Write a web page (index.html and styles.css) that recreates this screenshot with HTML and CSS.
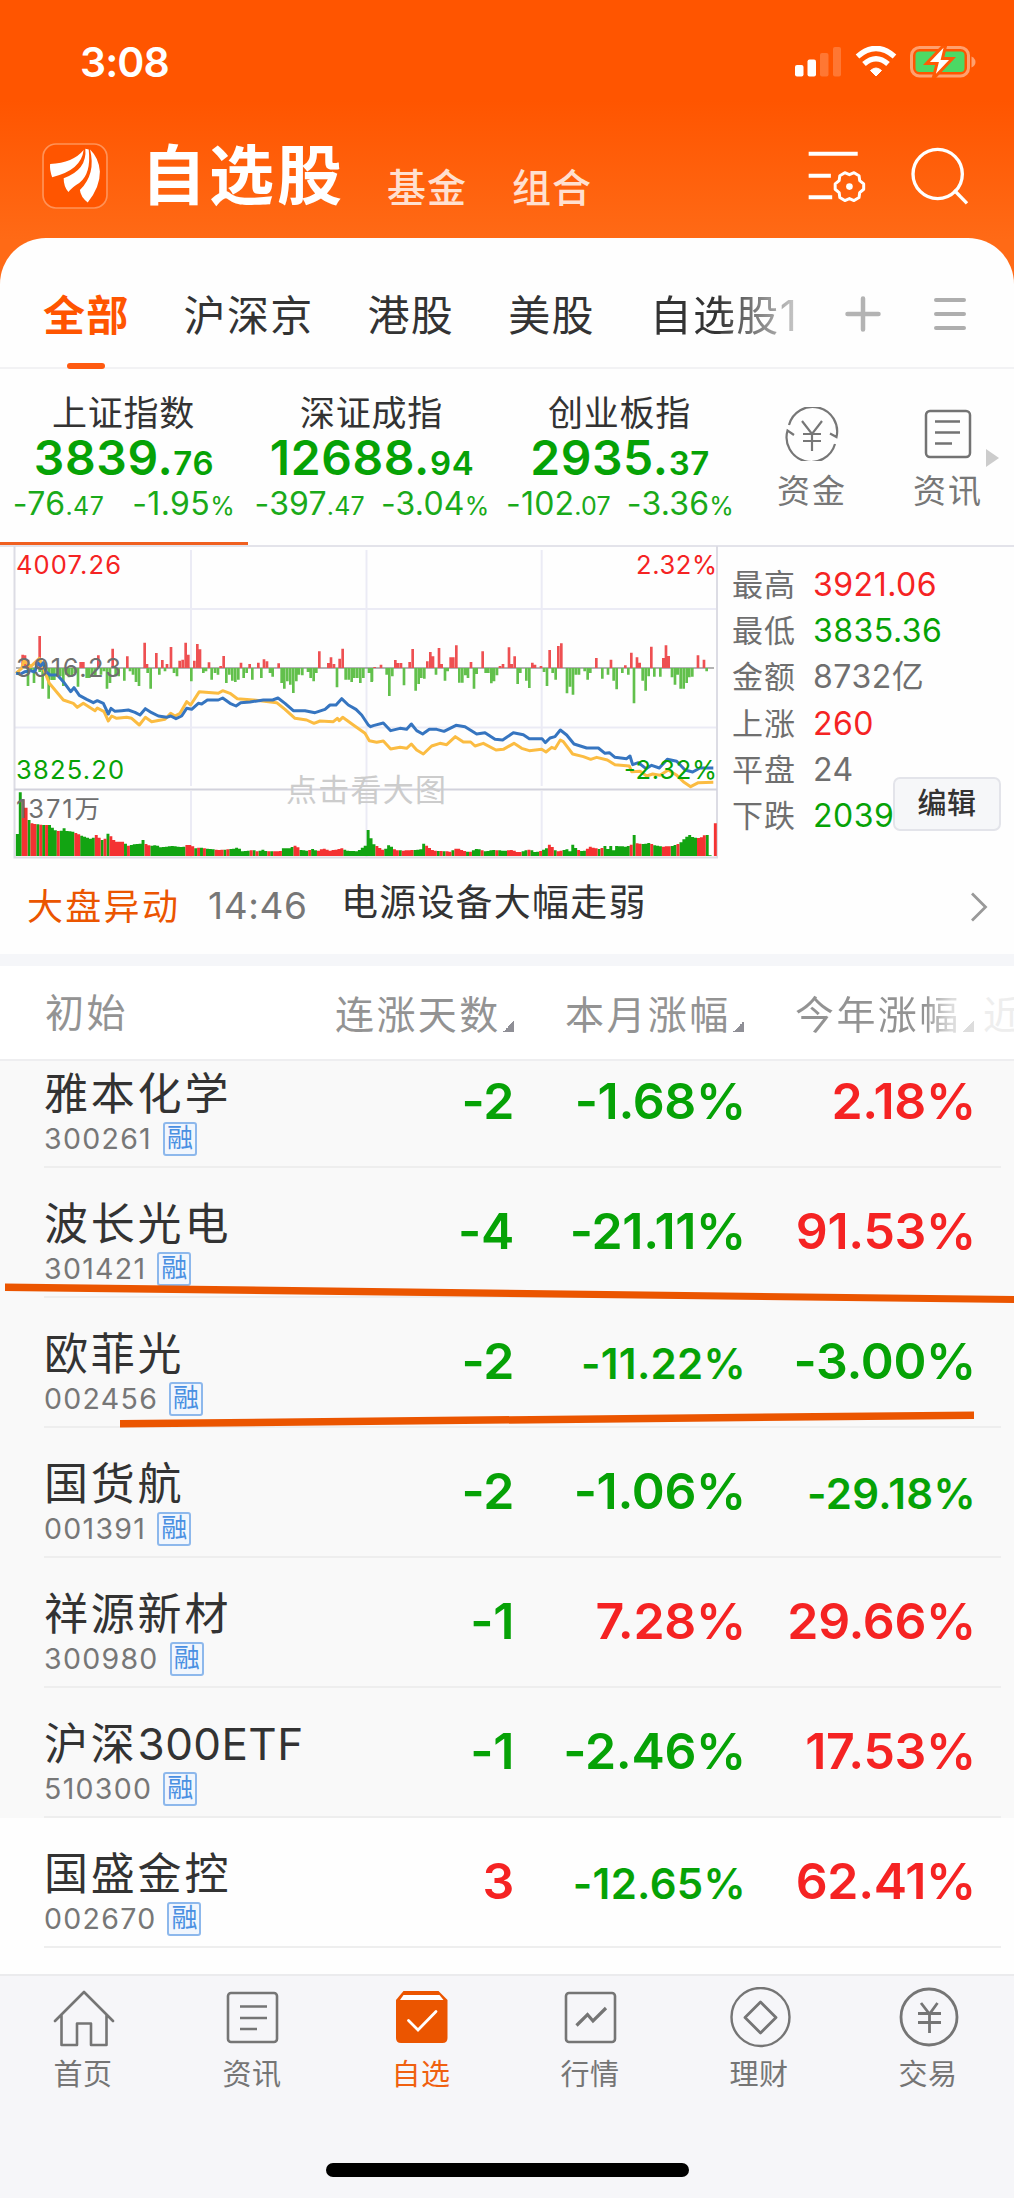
FILE: index.html
```html
<!DOCTYPE html>
<html lang="zh-CN">
<head>
<meta charset="utf-8">
<title>自选股</title>
<link rel="stylesheet" href="styles.css">
</head>
<body>
<div class="app">
  <div class="status">
    <span class="clock">3:08</span>
    <svg class="status-icons" viewBox="0 0 183 32" width="183" height="32">
      <g fill="#fff">
        <rect x="0" y="19" width="8.500" height="11.500" rx="2"/>
        <rect x="12.500" y="13.500" width="8.500" height="17" rx="2"/>
        <rect x="25" y="7" width="8.500" height="23.500" rx="2" opacity=".2"/>
        <rect x="38" y="1" width="8" height="29.500" rx="2" opacity=".2"/>
        <path d="M81 30 L75.500 24.500 Q81 19.500 86.500 24.500Z" stroke="#fff" stroke-linejoin="round"/>
      </g>
      <g fill="none" stroke="#fff" stroke-width="5.500">
        <path d="M62.500 10.500 Q81 -5.500 99.500 10.500"/>
        <path d="M69 18 Q81 7.500 93 18"/>
      </g>
      <rect x="116.500" y="1.500" width="57" height="28.500" rx="8" fill="none" stroke="#ffa06e" stroke-width="3"/>
      <rect x="120.500" y="5.500" width="49" height="20.500" rx="4" fill="#4cd964"/>
      <path d="M176.500 10.500 q4 2 4 5.500 t-4 5.500Z" fill="#ffa06e"/>
      <path d="M150 -2 L131.500 17.500 H142 L138 33 L157.500 12.500 H147.500 L151 -2Z" fill="#fff" stroke="#ff5a05" stroke-width="3"/>
    </svg>
  </div>
  <header class="header">
    <svg class="logo" viewBox="128 431 195 195" width="66" height="66">
      <rect x="131" y="434" width="189" height="189" rx="38" fill="#ff5500" stroke="#ff9257" stroke-width="5"/>
      <g fill="#fff">
        <path d="M152 493 Q220 490 251 452 Q244 512 158 532 Q150 510 152 493Z"/>
        <path d="M256 448 Q262 510 192 535 Q192 560 206 576 Q216 562 238 549 Q274 522 266 450Z"/>
        <path d="M270 450 Q288 522 240 570 Q242 590 263 607 Q300 560 299 515 Q296 475 270 450Z"/>
      </g>
    </svg>
    <h1 class="title">自选股</h1>
    <span class="sub sub-fund">基金</span>
    <span class="sub sub-group">组合</span>
    <svg class="filter" viewBox="903 450 175 156" width="58" height="52" fill="none" stroke="#fff" stroke-width="12">
      <path d="M905 461H1053M905 527H972M905 592H976"/>
      <path stroke-width="9" stroke-linejoin="round" d="M1071 552V568L1059 578L1057 593L1042 602L1028 596L1014 602L999 593L997 578L985 568V552L997 542L999 527L1014 518L1028 524L1042 518L1057 527L1059 542Z"/>
      <circle cx="1028" cy="560" r="10" fill="#fff" stroke="none"/>
    </svg>
    <svg class="search" viewBox="1212 438 174 174" width="58" height="58" fill="none" stroke="#fff" stroke-width="10">
      <circle cx="1292" cy="519" r="74"/><path d="M1341 567L1380 607"/>
    </svg>
  </header>

  <main class="sheet">
    <nav class="tabs">
      <span class="tab tab-on">全部</span>
      <span class="tab t2">沪深京</span>
      <span class="tab t3">港股</span>
      <span class="tab t4">美股</span>
      <span class="tab t5">自选股1</span>
      <svg class="plus" width="36" height="36" viewBox="0 0 36 36" stroke="#b3b3b3" stroke-width="4.500" stroke-linecap="round"><path d="M18 2.500V33.500M2.500 18H33.500"/></svg>
      <svg class="menu" width="34" height="34" viewBox="0 0 34 34" stroke="#aeaeae" stroke-width="4" stroke-linecap="round"><path d="M3 3H31M3 17H31M3 31H31"/></svg>
    </nav>

    <section class="indices">
      <div class="index index-on">
        <div class="iname">上证指数</div>
        <div class="ival">3839.<small>76</small></div>
        <div class="ichg"><span>-76<small>.47</small></span><span>-1.95<small>%</small></span></div>
      </div>
      <div class="index">
        <div class="iname">深证成指</div>
        <div class="ival">12688.<small>94</small></div>
        <div class="ichg tight"><span>-397<small>.47</small></span><span>-3.04<small>%</small></span></div>
      </div>
      <div class="index">
        <div class="iname">创业板指</div>
        <div class="ival">2935.<small>37</small></div>
        <div class="ichg tight"><span>-102<small>.07</small></span><span>-3.36<small>%</small></span></div>
      </div>
      <div class="quick quick-money">
        <svg width="54" height="54" viewBox="0 0 54 54" fill="none" stroke="#777" stroke-width="2.200">
          <path d="M4 18A24.500 24.500 0 0 1 51.500 30L45 26.500"/>
          <path d="M50 37A24.500 24.500 0 0 1 2.500 23.500L9 28"/>
          <path d="M17 14L27 27L37 14M18 27H36M18 34H36M27 27V44"/>
        </svg>
        <span>资金</span>
      </div>
      <div class="quick quick-news">
        <svg width="48" height="54" viewBox="0 0 48 54" fill="none" stroke="#737373" stroke-width="2.500">
          <rect x="2" y="4" width="44" height="46" rx="4"/><path d="M11 14.500H36M11 25.500H36M11 36.500H28"/>
        </svg>
        <span>资讯</span>
      </div>
      <svg class="more" width="13" height="18" viewBox="0 0 13 18"><path d="M0 0L13 9L0 18Z" fill="#ccc"/></svg>
    </section>

    <section class="market">
      <svg class="chart" width="720" height="314" viewBox="0 545 720 314">
        <g fill="none" stroke="#ebebf5" stroke-width="2">
          <path d="M191 550V786M191 791V857M366.500 550V786M366.500 791V857M541.700 550V786M541.700 791V857M14 609H717M14 727.500H717"/>
          <path stroke="#dcdce4" d="M14.500 546V857.500H717V546"/>
          <path stroke="#d2d2dc" d="M14 789.500H717"/>
        </g>
        <path d="M16 668H714" stroke="#999" stroke-width="1.500"/>
        <text class="hint" x="286" y="801" textLength="160">点击看大图</text>
        <g id="plot" transform="translate(0 540) scale(.33333)"></g>
        <text class="axis red" x="16" y="573.500" textLength="105">4007.26</text>
        <text class="axis red" x="636" y="573.500" textLength="81">2.32%</text>
        <text class="axis gray" x="16" y="676.500" textLength="105">3916.23</text>
        <text class="axis green" x="16" y="779" textLength="108">3825.20</text>
        <text class="axis green" x="624" y="779" textLength="93">-2.32%</text>
        <text class="axis gray" x="16" y="818" textLength="84">1371万</text>
      </svg>
      <dl class="stats">
        <dt>最高</dt><dd class="red">3921.06</dd>
        <dt>最低</dt><dd class="green">3835.36</dd>
        <dt>金额</dt><dd>8732亿</dd>
        <dt>上涨</dt><dd class="red">260</dd>
        <dt>平盘</dt><dd>24</dd>
        <dt>下跌</dt><dd class="green">2039</dd>
      </dl>
      <button class="edit">编辑</button>
    </section>

    <section class="news">
      <span class="news-tag">大盘异动</span>
      <span class="news-time">14:46</span>
      <span class="news-title">电源设备大幅走弱</span>
      <svg class="chev" width="18" height="30" viewBox="0 0 18 30" fill="none" stroke="#999" stroke-width="2.800"><path d="M2 1.500L15.500 15L2 28.500"/></svg>
    </section>

    <section class="table">
      <div class="thead">
        <span class="h1c">初始</span>
        <span class="hc">连涨天数<i></i></span>
        <span class="hc">本月涨幅<i></i></span>
        <span class="hc">今年涨幅<i></i></span>
        <span class="hnext">近</span>
      </div>
      <div class="row row-first">
        <div class="stock"><b>雅本化学</b><p>300261<em>融</em></p></div>
        <span class="v green">-2</span><span class="v green">-1.68%</span><span class="v red">2.18%</span>
      </div>
      <div class="row">
        <div class="stock"><b>波长光电</b><p>301421<em>融</em></p></div>
        <span class="v green">-4</span><span class="v green">-21.11%</span><span class="v red">91.53%</span>
      </div>
      <div class="row">
        <div class="stock"><b>欧菲光</b><p>002456<em>融</em></p></div>
        <span class="v green">-2</span><span class="v green sm">-11.22%</span><span class="v green">-3.00%</span>
      </div>
      <div class="row">
        <div class="stock"><b>国货航</b><p>001391<em>融</em></p></div>
        <span class="v green">-2</span><span class="v green">-1.06%</span><span class="v green sm">-29.18%</span>
      </div>
      <div class="row">
        <div class="stock"><b>祥源新材</b><p>300980<em>融</em></p></div>
        <span class="v green">-1</span><span class="v red">7.28%</span><span class="v red">29.66%</span>
      </div>
      <div class="row">
        <div class="stock"><b>沪深<span class="latin">300ETF</span></b><p>510300<em>融</em></p></div>
        <span class="v green">-1</span><span class="v green">-2.46%</span><span class="v red">17.53%</span>
      </div>
      <div class="row row-last">
        <div class="stock"><b>国盛金控</b><p>002670<em>融</em></p></div>
        <span class="v red">3</span><span class="v green sm">-12.65%</span><span class="v red">62.41%</span>
      </div>
      <svg class="marks" width="1014" height="150" viewBox="0 1280 1014 150" fill="#eb5500">
        <path d="M5 1283.500L1014 1296V1303L5 1291Z"/>
        <path d="M120 1420L974 1411.500V1419L120 1427.500Z"/>
      </svg>
    </section>
  </main>

  <footer class="tabbar">
    <div class="items">
      <div class="item">
        <svg width="62" height="62" viewBox="0 0 62 62" fill="none" stroke="#757575" stroke-width="2.600" stroke-linejoin="round" stroke-linecap="round"><path d="M2 34L31 5L60 34M8.500 28V58H24V36.500H38V58H53.500V28"/></svg>
        <span>首页</span>
      </div>
      <div class="item">
        <svg width="62" height="62" viewBox="0 0 62 62" fill="none" stroke="#757575" stroke-width="2.600"><rect x="6" y="6" width="49" height="49" rx="3"/><path d="M18 19.500H45M18 31H45M18 42H35"/></svg>
        <span>资讯</span>
      </div>
      <div class="item on">
        <svg width="62" height="62" viewBox="0 0 62 62"><path d="M12.500 4H47.500L56.500 13V51Q56.500 56 51.500 56H10Q5 56 5 51V13Z" fill="#eb5500"/><path d="M12.500 8H48.500L52.500 13H9Z" fill="#fff"/><path d="M17.500 33.500L27 43L45 24.500" fill="none" stroke="#fff" stroke-width="2.800" stroke-linecap="round"/></svg>
        <span>自选</span>
      </div>
      <div class="item">
        <svg width="62" height="62" viewBox="0 0 62 62" fill="none" stroke="#757575" stroke-width="2.600"><rect x="6" y="6" width="49" height="49" rx="3"/><path d="M16.500 38.500L27.500 27.500L33 34L46 21" stroke-width="3.200"/></svg>
        <span>行情</span>
      </div>
      <div class="item">
        <svg width="62" height="62" viewBox="0 0 62 62" fill="none" stroke="#757575" stroke-width="2.400" stroke-linejoin="round"><circle cx="31.500" cy="30" r="29"/><path d="M31.500 15L47 30.500L31.500 46L16 30.500Z" stroke-width="2.800"/></svg>
        <span>理财</span>
      </div>
      <div class="item">
        <svg width="62" height="62" viewBox="0 0 62 62" fill="none" stroke="#757575" stroke-width="2.800"><circle cx="31" cy="30" r="28"/><path d="M23 16L31.500 27L39.500 16M20 26.500H43M20 35.500H43M31.500 27V46"/></svg>
        <span>交易</span>
      </div>
    </div>
    <div class="home"></div>
  </footer>
</div>
<script src="chart.js"></script>
</body>
</html>
```
FILE: styles.css
```css
* { box-sizing: border-box; }
body {
  margin: 0;
  font-family: Inter, "Noto Sans CJK SC", sans-serif;
  color: #333;
  background: #fff;
}
.app {
  width: 1014px;
  height: 2198px;
  display: flex;
  flex-direction: column;
  overflow: hidden;
  background: linear-gradient(#ff5500 0, #ff5500 100px, #ff6a16 240px, #ff6a16 300px);
}
.red { color: #f52323; fill: #f52323; }
.green { color: #06a206; fill: #06a206; }
.gray { fill: #6f6f6f; }
svg { display: block; flex: none; }
span { white-space: nowrap; }

.status {
  height: 124px;
  display: flex;
  align-items: center;
  justify-content: space-between;
  padding: 0 36px 0 80px;
  color: #fff;
}
.clock { font-size: 41px; font-weight: 600; letter-spacing: -.9px; }

.header {
  height: 114px;
  padding: 0 45px 11px 42px;
  display: flex;
  align-items: center;
  color: #fff;
}
.title {
  margin: 0 0 0 33px;
  font-size: 65px;
  line-height: 80px;
  font-weight: 700;
  letter-spacing: 3px;
}
.sub { font-size: 39px; line-height: 50px; padding-top: 24px; letter-spacing: 1px; font-weight: 500; color: #ffe0d0; }
.sub-fund { margin-left: 42px; }
.sub-group { margin-left: 45px; }
.filter { margin-left: auto; }
.search { margin-left: 45px; }

.sheet {
  flex: 1;
  background: #fefefe;
  border-radius: 46px 46px 0 0;
  overflow: hidden;
}
.tabs {
  height: 131px;
  border-bottom: 2px solid #f2f2f4;
  padding: 0 47px 0 43px;
  display: flex;
  align-items: center;
}
.tab {
  position: relative;
  height: 129px;
  line-height: 155px;
  font-size: 42px;
  letter-spacing: 1.300px;
}
.tab-on { font-weight: 700; color: #ff5500; }
.tab-on::after {
  content: "";
  position: absolute;
  left: 24px;
  bottom: -2px;
  width: 38px;
  height: 6px;
  border-radius: 3px;
  background: #ff5a10;
}
.t2 { margin-left: 54px; }
.t3 { margin-left: 54px; }
.t4 { margin-left: 54px; }
.t5 {
  margin-left: 55px;
  background: linear-gradient(90deg, #333 45%, #ccc 100%);
  -webkit-background-clip: text;
  background-clip: text;
  color: transparent;
}
.plus { margin: 23px 0 0 auto; }
.menu { margin: 23px 0 0 52px; }

.indices {
  height: 178px;
  display: flex;
  border-bottom: 2px solid #e3e3ea;
  padding-right: 15px;
}
.index {
  width: 248px;
  flex: none;
  display: flex;
  flex-direction: column;
  align-items: center;
  padding-top: 23px;
  height: 176px;
}
.index-on { border-bottom: 3px solid #f06020; }
.iname { font-size: 35px; line-height: 42px; letter-spacing: .8px; margin-right: 1px; }
.ival {
  color: #06a206;
  font-size: 48px;
  line-height: 48px;
  font-weight: 600;
  letter-spacing: .6px;
}
.ival small, .ichg small { line-height: 0; }
.ival small { font-size: 33px; }
.ichg {
  color: #1aaa1a;
  display: flex;
  gap: 28px;
  font-size: 32px;
  line-height: 44px;
  letter-spacing: .4px;
}
.ichg.tight { gap: 16px; letter-spacing: .2px; }
.ichg small { font-size: 25px; }
.quick {
  display: flex;
  flex-direction: column;
  align-items: center;
  padding-top: 38px;
  font-size: 33px;
  line-height: 40px;
  letter-spacing: 2px;
  color: #777;
  width: 76px;
}
.quick span { margin-top: 10px; }
.quick-money { margin-left: 30px; }
.quick-news { margin-left: 60px; }
.more { margin: 80px 0 0 auto; }

.market {
  height: 312px;
  display: flex;
  position: relative;
}
.chart { margin-top: -2px; }
.axis { font-size: 25.500px; }
.hint { font-size: 31px; fill: #ccc; }
.stats {
  margin: 15px 0 0 12px;
  display: grid;
  grid-template-columns: 81px auto;
  grid-auto-rows: 46.200px;
  font-size: 32px;
  line-height: 46px;
  letter-spacing: .5px;
  color: #6f6f6f;
  align-content: start;
}
.stats dt { font-size: 31px; letter-spacing: 1px; }
.stats dd { margin: 0; white-space: nowrap; }
.stats .red { color: #f52323; }
.stats .green { color: #06a206; }
.edit {
  position: absolute;
  left: 893px;
  top: 230px;
  width: 108px;
  height: 54px;
  border: 2px solid #e3e4ea;
  border-radius: 7px;
  background: #f6f7f9;
  font: 500 29px/48px Inter, "Noto Sans CJK SC", sans-serif;
  color: #333;
  padding: 0;
  letter-spacing: .5px;
}

.news {
  height: 107px;
  border-bottom: 12px solid #f5f6f9;
  display: flex;
  align-items: center;
  padding: 0 26px 0 27px;
  font-size: 36px;
  line-height: 50px;
}
.news-tag { color: #eb5500; letter-spacing: 2.300px; width: 181px; }
.news-time { color: #777; font-size: 37px; letter-spacing: .6px; width: 133px; margin-top: -2px; }
.news-title { font-size: 37px; letter-spacing: 1.200px; margin-top: -7px; }
.chev { margin-left: auto; }

.table { position: relative; }
.thead {
  height: 95px;
  border-bottom: 2px solid #eeeef0;
  background: #fff;
  display: flex;
  align-items: center;
  font-size: 39px;
  line-height: 60px;
  letter-spacing: 2.400px;
  color: #939393;
}
.h1c { width: 285px; padding-left: 45px; }
.hc { width: 230px; padding: 4px 0 0 50px; display: flex; align-items: center; }
.hc i {
  width: 11px;
  height: 11px;
  margin: 24px 0 0 2px;
  background: linear-gradient(135deg, transparent 50%, #8f8f96 50%);
}
.hc:nth-of-type(4) {
  background: linear-gradient(90deg, #939393 78%, #ddd 90%);
  -webkit-background-clip: text;
  background-clip: text;
  color: transparent;
}
.hc:nth-of-type(4) i { background: linear-gradient(135deg, transparent 50%, #ddd 50%); }
.hnext { color: #eee; width: 31px; margin-left: 8px; overflow: hidden; padding-top: 4px; }

.row {
  height: 130px;
  background: linear-gradient(#eeeeee, #eeeeee) 44px 100% / 957px 2px no-repeat #f9f9f9;
  display: grid;
  grid-template-columns: 284px 230px 232px 230px;
  align-items: end;
}
.row-first { height: 107px; }
.row-last { background-color: #fefefe; }
.stock { padding: 0 0 12px 44px; white-space: nowrap; }
.stock b {
  display: block;
  font-size: 44px;
  line-height: 53px;
  font-weight: 400;
  letter-spacing: 2.800px;
}
.stock .latin { letter-spacing: .4px; }
.stock p {
  margin: 0;
  display: flex;
  align-items: center;
  font-size: 28.500px;
  line-height: 35px;
  letter-spacing: 1.300px;
  color: #777;
}
.stock em {
  margin-left: 11px;
  width: 34px;
  height: 34px;
  border: 2px solid #8db8ec;
  border-radius: 3px;
  font-style: normal;
  font-size: 26px;
  line-height: 28px;
  letter-spacing: 0;
  text-align: center;
  color: #4a90e2;
  background: #f1f6fd;
}
.v {
  text-align: right;
  font-size: 50px;
  line-height: 60px;
  font-weight: 600;
  letter-spacing: -.3px;
  padding-bottom: 37px;
}
.v.sm { font-size: 42px; letter-spacing: .3px; padding-bottom: 34px; }
.marks { position: absolute; left: 0; top: 314px; }

.tabbar {
  height: 224px;
  background: #f6f6f9;
  border-top: 2px solid #ebebed;
}
.items { display: grid; grid-template-columns: repeat(6, 169px); height: 187px; margin-left: -1px; }
.item {
  display: flex;
  flex-direction: column;
  align-items: center;
  padding-top: 11px;
  font-size: 29px;
  line-height: 36px;
  letter-spacing: .5px;
  color: #757575;
}
.item span { margin: 8px 1px 0 0; }
.item.on { color: #f06010; }
.home { width: 363px; height: 14px; border-radius: 7px; background: #000; margin: 0 auto; }
```
FILE: chart.js
```js
// Plot units: three per pixel; the second half of the session starts at SHIFT.
const SHIFT = 1110;
const join = (a, b) => a.concat(b.map(([x, y]) => [x + SHIFT, y]));
const pts = s => s.trim().split(/\s+/).map(p => p.split(/[,:]/).map(Number));
const plot = document.getElementById('plot');
const NS = 'http://www.w3.org/2000/svg';
function path(d, attrs) {
  const el = document.createElementNS(NS, 'path');
  el.setAttribute('d', d);
  for (const k in attrs) el.setAttribute(k, attrs[k]);
  plot.appendChild(el);
}

// Buying and selling strength around the previous close.
const up = join(pts('68:40 75:38 84:25 110:20 119:96 242:18 250:18 295:38 338:58 382:35 434:76 441:12 469:45 487:24 501:12 513:63 539:22 548:25 557:76 565:40 583:22 592:72 600:56 627:17 662:6 671:36 723:16 749:12 775:16 792:26 801:20 836:14 958:50 985:15 993:32 1002:12 1019:28 1028:58'),
  pts('14:3 33:10 76:24 84:15 93:15 119:18 128:57 172:20 181:48 189:35 207:60 215:12 242:32 250:32 259:68 303:18 338:50 390:6 399:12 417:62 425:12 434:35 487:16 495:10 513:6 539:54 565:66 574:74 679:30 723:25 766:8 784:46 801:32 809:16 844:64 880:30 888:68 896:36 984:38 1002:25'));
const down = join(pts('84:54 93:10 102:45 119:12 128:62 137:20 146:92 155:36 163:36 172:20 181:25 190:54 199:20 207:28 216:25 225:15 234:56 260:30 268:30 277:20 286:25 303:20 312:10 321:62 330:45 347:25 356:25 373:38 390:10 399:20 408:42 417:54 443:15 452:62 478:20 495:10 522:15 531:25 574:40 610:15 618:10 635:35 645:15 654:20 679:45 688:20 697:38 706:42 715:35 731:30 740:15 757:35 784:30 810:15 818:26 845:45 853:62 862:40 871:50 880:75 889:40 897:20 907:22 924:12 932:30 941:40 949:15 1011:58 1037:35 1046:35 1055:42 1063:30 1072:30 1081:45 1090:30 1107:15 1116:40'),
  pts('5:42 50:20 58:84 67:25 102:52 137:68 146:48 154:30 163:32 198:20 225:38 233:10 268:44 277:44 286:22 294:30 312:62 320:18 347:15 355:15 364:46 372:40 381:22 443:48 451:15 469:38 478:60 522:12 531:54 548:15 557:35 591:76 600:56 609:80 618:20 627:20 644:10 653:35 661:15 697:32 714:20 731:38 740:64 757:15 775:20 792:106 818:38 827:68 836:25 853:26 871:26 906:28 915:50 923:20 932:62 941:62 950:45 958:28 967:26 1010:10'));
path(up.map(([x, h]) => `M${x} 384v${-h}`).join(''), { stroke: '#ee5052', 'stroke-width': 8 });
path(down.map(([x, h]) => `M${x} 384v${h}`).join(''), { stroke: '#62c04c', 'stroke-width': 8 });

// Traded volume.
const tops = join(pts('52,882 60,755 68,775 76,790 84,835 93,850 128,855 150,855 163,870 182,875 190,862 199,873 220,875 240,885 277,898 286,882 296,892 312,905 321,878 334,890 345,905 372,905 382,918 405,912 420,912 427,895 434,910 450,918 470,915 482,922 520,918 550,922 557,915 574,915 585,925 600,922 620,926 660,930 700,926 715,922 725,934 760,930 775,936 785,928 800,934 840,934 850,925 870,925 888,915 900,930 920,932 942,926 950,934 970,925 990,932 1028,925 1040,932 1072,934 1098,915 1107,852 1115,908 1130,918'),
  pts('40,930 50,924 58,913 75,930 100,932 130,930 154,928 163,906 172,920 190,932 240,935 262,924 280,932 300,936 320,926 345,934 370,930 400,932 430,930 445,938 480,928 495,936 510,934 530,925 540,912 550,925 560,935 590,928 600,934 609,912 620,928 640,935 660,920 690,928 705,918 715,928 722,918 732,932 740,918 770,920 784,914 792,883 800,910 825,912 838,908 850,915 880,920 905,918 930,910 945,895 958,884 970,892 990,895 1002,886 1012,885 1018,946 1030,948'));
const redRuns = join(pts('64,80 90,105 114,123 132,145 168,180 220,237 288,300 308,316 330,342 350,375 382,392 435,450 465,472 500,508 535,541 552,580 590,604 612,618 640,668 680,690 750,758 768,775 800,808 818,842 880,900 925,935 950,1008 1015,1032 1122,1155'), []).concat(
  pts('70,85 95,130 168,200 210,218 228,240 250,285 295,305 335,345 375,382 410,458 470,482 505,515 533,550 560,578 625,632 650,682 690,698 715,722 778,788 800,812 838,850 874,900 918,932 978,1010').map(([a, b]) => [a + SHIFT, b + SHIFT]));
const topAt = x => {
  for (let i = 1; i < tops.length; i++) {
    const [x0, y0] = tops[i - 1], [x1, y1] = tops[i];
    if (x <= x1) return y0 + (y1 - y0) * Math.max(0, x - x0) / (x1 - x0);
  }
  return 948;
};
const volume = { r: '', g: '' };
for (let i = 0; i < 239; i++) {
  const x = 52 + i * 8.77;
  const side = redRuns.some(([a, b]) => x >= a && x <= b) ? 'r' : 'g';
  volume[side] += `M${x.toFixed(1)} 948V${topAt(x).toFixed(0)}`;
}
volume.r += 'M2146 948V850';
path(volume.g, { stroke: '#12a412', 'stroke-width': 8.8 });
path(volume.r, { stroke: '#f43232', 'stroke-width': 8.8 });

// Average (yellow) and index (blue) lines.
const yellow = join(pts('48,400 65,385 72,362 92,380 118,355 140,410 148,430 190,480 220,490 232,502 250,490 285,512 292,504 312,515 325,543 335,528 350,535 380,532 395,535 418,555 436,532 455,545 495,538 512,520 525,528 540,520 560,485 572,495 598,455 655,460 668,452 690,460 712,476 760,480 830,488 855,508 885,535 920,540 942,550 960,543 1000,545 1012,535 1018,542 1028,532 1060,555 1095,580 1108,602 1130,607'),
  pts('40,603 62,627 90,622 110,625 124,612 140,630 160,642 185,618 210,610 230,614 256,590 280,606 302,606 315,618 340,610 378,630 400,628 432,610 455,625 478,632 515,628 528,636 545,622 555,626 571,600 580,605 608,642 640,650 662,658 680,652 712,660 735,674 778,678 785,695 810,694 830,708 848,702 870,706 895,690 918,704 940,725 962,740 985,728 1030,727'));
const blue = join(pts('48,400 62,402 75,395 90,392 105,396 112,368 122,378 130,368 138,395 150,405 172,405 190,425 212,455 222,443 238,466 260,478 280,488 292,482 310,490 325,522 333,505 345,514 365,512 385,510 405,517 420,525 436,506 455,518 475,528 500,532 512,528 528,536 545,528 560,505 575,508 595,490 605,492 622,480 655,480 668,474 690,490 708,498 722,488 750,486 790,480 818,480 834,474 855,490 880,512 915,512 945,518 975,508 990,495 1008,495 1025,476 1045,495 1068,508 1085,525 1105,555 1112,560'),
  pts('10,557 40,549 62,572 90,565 110,568 124,552 140,572 158,582 178,568 200,568 222,574 258,556 285,560 320,582 345,578 375,598 398,600 430,578 460,584 478,596 516,596 526,608 540,594 555,590 571,570 590,585 612,612 650,624 685,624 705,640 718,638 735,652 770,656 780,648 788,674 805,668 828,686 845,676 868,684 892,658 920,664 945,690 968,696 990,684 1030,684'));
const line = { fill: 'none', 'stroke-width': 9, 'stroke-linejoin': 'round' };
path('M' + yellow.join('L'), { ...line, stroke: '#fbbc42' });
path('M' + blue.join('L'), { ...line, stroke: '#3675c0' });
```
